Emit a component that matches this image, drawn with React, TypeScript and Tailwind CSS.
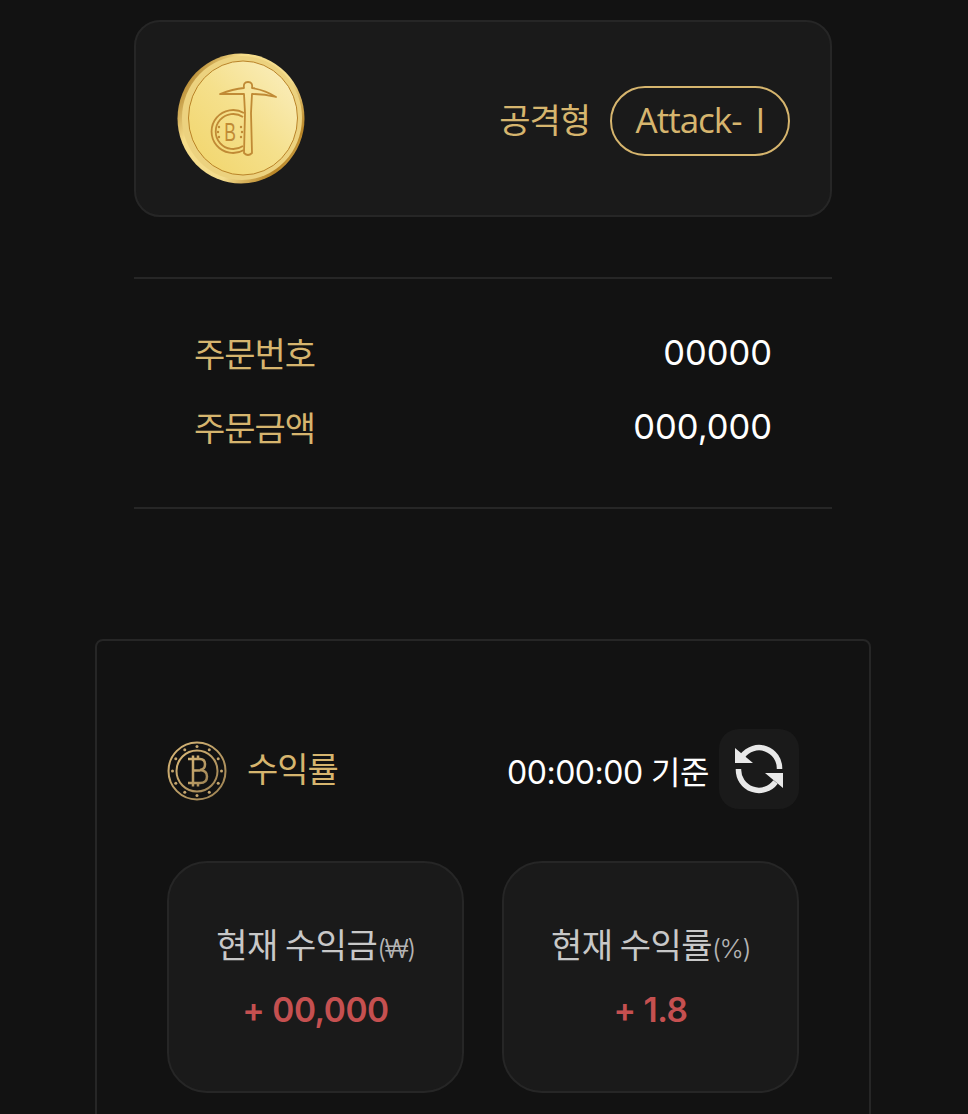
const inter = "font-['Inter','Noto_Sans_CJK_KR',sans-serif]"

function CoinLogo() {
  return (
    <svg width="128" height="131" viewBox="0 0 128 131" className="shrink-0">
      <defs>
        <linearGradient id="rim" x1="0" y1="0.2" x2="1" y2="0.9">
          <stop offset="0" stopColor="#a8771f" />
          <stop offset="0.25" stopColor="#f6dd8a" />
          <stop offset="0.6" stopColor="#f3dc8e" />
          <stop offset="0.85" stopColor="#b98526" />
          <stop offset="1" stopColor="#ecd280" />
        </linearGradient>
        <linearGradient id="face" x1="0" y1="1" x2="1" y2="0">
          <stop offset="0" stopColor="#f1d468" />
          <stop offset="0.5" stopColor="#f5e08c" />
          <stop offset="1" stopColor="#fbf0c4" />
        </linearGradient>
      </defs>
      <ellipse cx="64" cy="65.500" rx="63.500" ry="65" fill="url(#rim)" />
      <ellipse cx="65" cy="65" rx="60" ry="62" fill="#ecd27f" />
      <ellipse cx="66" cy="65" rx="54.500" ry="57" fill="url(#face)" stroke="#b98328" strokeWidth="1" />
      <g fill="none" stroke="#c08a35" strokeWidth="1.8" strokeLinejoin="round">
        <path d="M43 41 Q56 36 67 35 Q66 29 71 29 Q76 29 75 35 Q88 37 99 44 Q87 41 75 41 L74 60 L75 100 Q71 104 67 100 L68 60 L67 41 Q56 41 43 41 Z" />
        <path d="M67 60 A21.500 21.500 0 1 0 67 97" />
        <path d="M66 64 A17.500 17.500 0 1 0 66 93" />
      </g>
      <text transform="translate(53 88) scale(0.7 1)" fill="#c08a35" fontSize="25" textAnchor="middle" fontFamily="'Liberation Sans', sans-serif">
        B
      </text>
      <g fill="#c08a35">
        <circle cx="42" cy="74" r="1.2" />
        <circle cx="41" cy="79" r="1.2" />
        <circle cx="42" cy="84" r="1.2" />
        <circle cx="64" cy="74" r="1.2" />
        <circle cx="65" cy="79" r="1.2" />
        <circle cx="64" cy="84" r="1.2" />
      </g>
    </svg>
  )
}

function BitcoinBadge() {
  const dots = Array.from({ length: 12 }, (_, i) => (i * Math.PI) / 6)
  return (
    <svg width="60" height="60" viewBox="0 0 60 60" className="mt-1 shrink-0">
      <defs>
        <linearGradient id="badge" x1="0" y1="0" x2="1" y2="1">
          <stop offset="0" stopColor="#d9b878" />
          <stop offset="1" stopColor="#9c8152" />
        </linearGradient>
      </defs>
      <circle cx="30" cy="30" r="28.500" fill="none" stroke="url(#badge)" strokeWidth="2" />
      <circle cx="30" cy="30" r="20.500" fill="none" stroke="url(#badge)" strokeWidth="2" />
      {dots.map((a) => (
        <circle key={a} cx={30 + 24.5 * Math.cos(a)} cy={30 + 24.5 * Math.sin(a)} r="1.500" fill="#c4a56e" />
      ))}
      <path
        d="M24 18H33Q38 18 38 23.500Q38 28.500 33 29Q40 29.500 40 35.500Q40 42 33 42H21M21 18H24M26 18V42M26 29.500H33M26 14.500V18M31 14.500V18M26 42V45.500M31 42V45.500"
        fill="none"
        stroke="url(#badge)"
        strokeWidth="2.500"
      />
    </svg>
  )
}

// sync arrows, traced from the reference
function SyncIcon() {
  return (
    <svg width="52" height="52" viewBox="0 0 52 52" className="text-[#e8e8e8]">
      <path d="M9.500 13A20.500 20.500 0 0 1 46.500 26M5.500 26A20.500 20.500 0 0 0 42.500 39" fill="none" stroke="currentColor" strokeWidth="5.500" />
      <path d="M2 5L20 20H2ZM50 45V30H32Z" fill="currentColor" />
    </svg>
  )
}

function ProfitCard({ label, unit, value }: { label: string; unit: string; value: string }) {
  return (
    <div className="flex h-[232px] w-[297px] flex-col items-center rounded-[40px] border-2 border-[#262626] bg-[#1a1a1a] pt-[57px]">
      <div className="flex h-[48px] items-baseline text-[34px] leading-[48px] tracking-[-0.5px] text-[#c8c8c8]">
        {label}
        <span className={`text-[26px] font-light tracking-[-1.5px] text-[#b4b4b4] ${inter}`}>{unit}</span>
      </div>
      <div className={`mt-[21px] text-[33.5px] leading-[42px] font-semibold tracking-[-0.5px] text-[#c55050] ${inter}`}>{value}</div>
    </div>
  )
}

export default function App() {
  return (
    <div className="h-[1114px] w-full overflow-hidden bg-[#121212] pt-5 font-['Noto_Sans_CJK_KR',sans-serif]">
      <div className="ml-[134px] w-[698px]">
        <div className="flex h-[197px] items-center justify-between rounded-[26px] border-2 border-[#262626] bg-[#1a1a1a] pr-[40px] pl-[41px]">
          <CoinLogo />
          <div className="mt-1 flex items-center gap-5">
            <span className="-mt-1 text-[34px] tracking-[-1px] text-[#d6b56e]">공격형</span>
            <span className="flex h-[70px] w-[180px] items-center justify-center rounded-full border-2 border-[#d6b56e] text-[35px] tracking-[-1px] [word-spacing:6px] text-[#d6b56e] font-['Open_Sans',sans-serif]">
              Attack- I
            </span>
          </div>
        </div>

        <div className="mt-[60px] border-y-2 border-[#262626] px-[60px] pt-[37px] pb-[43px]">
          <div className="flex h-[74px] items-center justify-between">
            <span className="-mt-[2px] text-[34px] tracking-[-1px] text-[#d6b56e]">주문번호</span>
            <span className={`text-[34.5px] text-white ${inter}`}>00000</span>
          </div>
          <div className="flex h-[74px] items-center justify-between">
            <span className="-mt-[2px] text-[34px] tracking-[-1px] text-[#d6b56e]">주문금액</span>
            <span className={`text-[34.5px] text-white ${inter}`}>000,000</span>
          </div>
        </div>
      </div>

      <div className="mt-[130px] ml-[95px] h-[600px] w-[776px] rounded-[8px] border-2 border-[#262626] px-[70px] pt-[88px]">
        <div className="flex items-center justify-between">
          <div className="flex items-center gap-5">
            <BitcoinBadge />
            <span className="-mt-1 text-[34px] tracking-[-1px] text-[#d6b56e]">수익률</span>
          </div>
          <div className="flex items-center gap-[10px]">
            <span className={`mt-2 text-[32px] tracking-[-0.5px] text-white ${inter}`}>00:00:00 기준</span>
            <div className="flex h-[80px] w-[80px] items-center justify-center rounded-[20px] bg-[#1a1a1a]">
              <SyncIcon />
            </div>
          </div>
        </div>

        <div className="mt-[52px] flex justify-between">
          <ProfitCard label="현재 수익금" unit="(₩)" value="+ 00,000" />
          <ProfitCard label="현재 수익률" unit="(%)" value="+ 1.8" />
        </div>
      </div>
    </div>
  )
}
